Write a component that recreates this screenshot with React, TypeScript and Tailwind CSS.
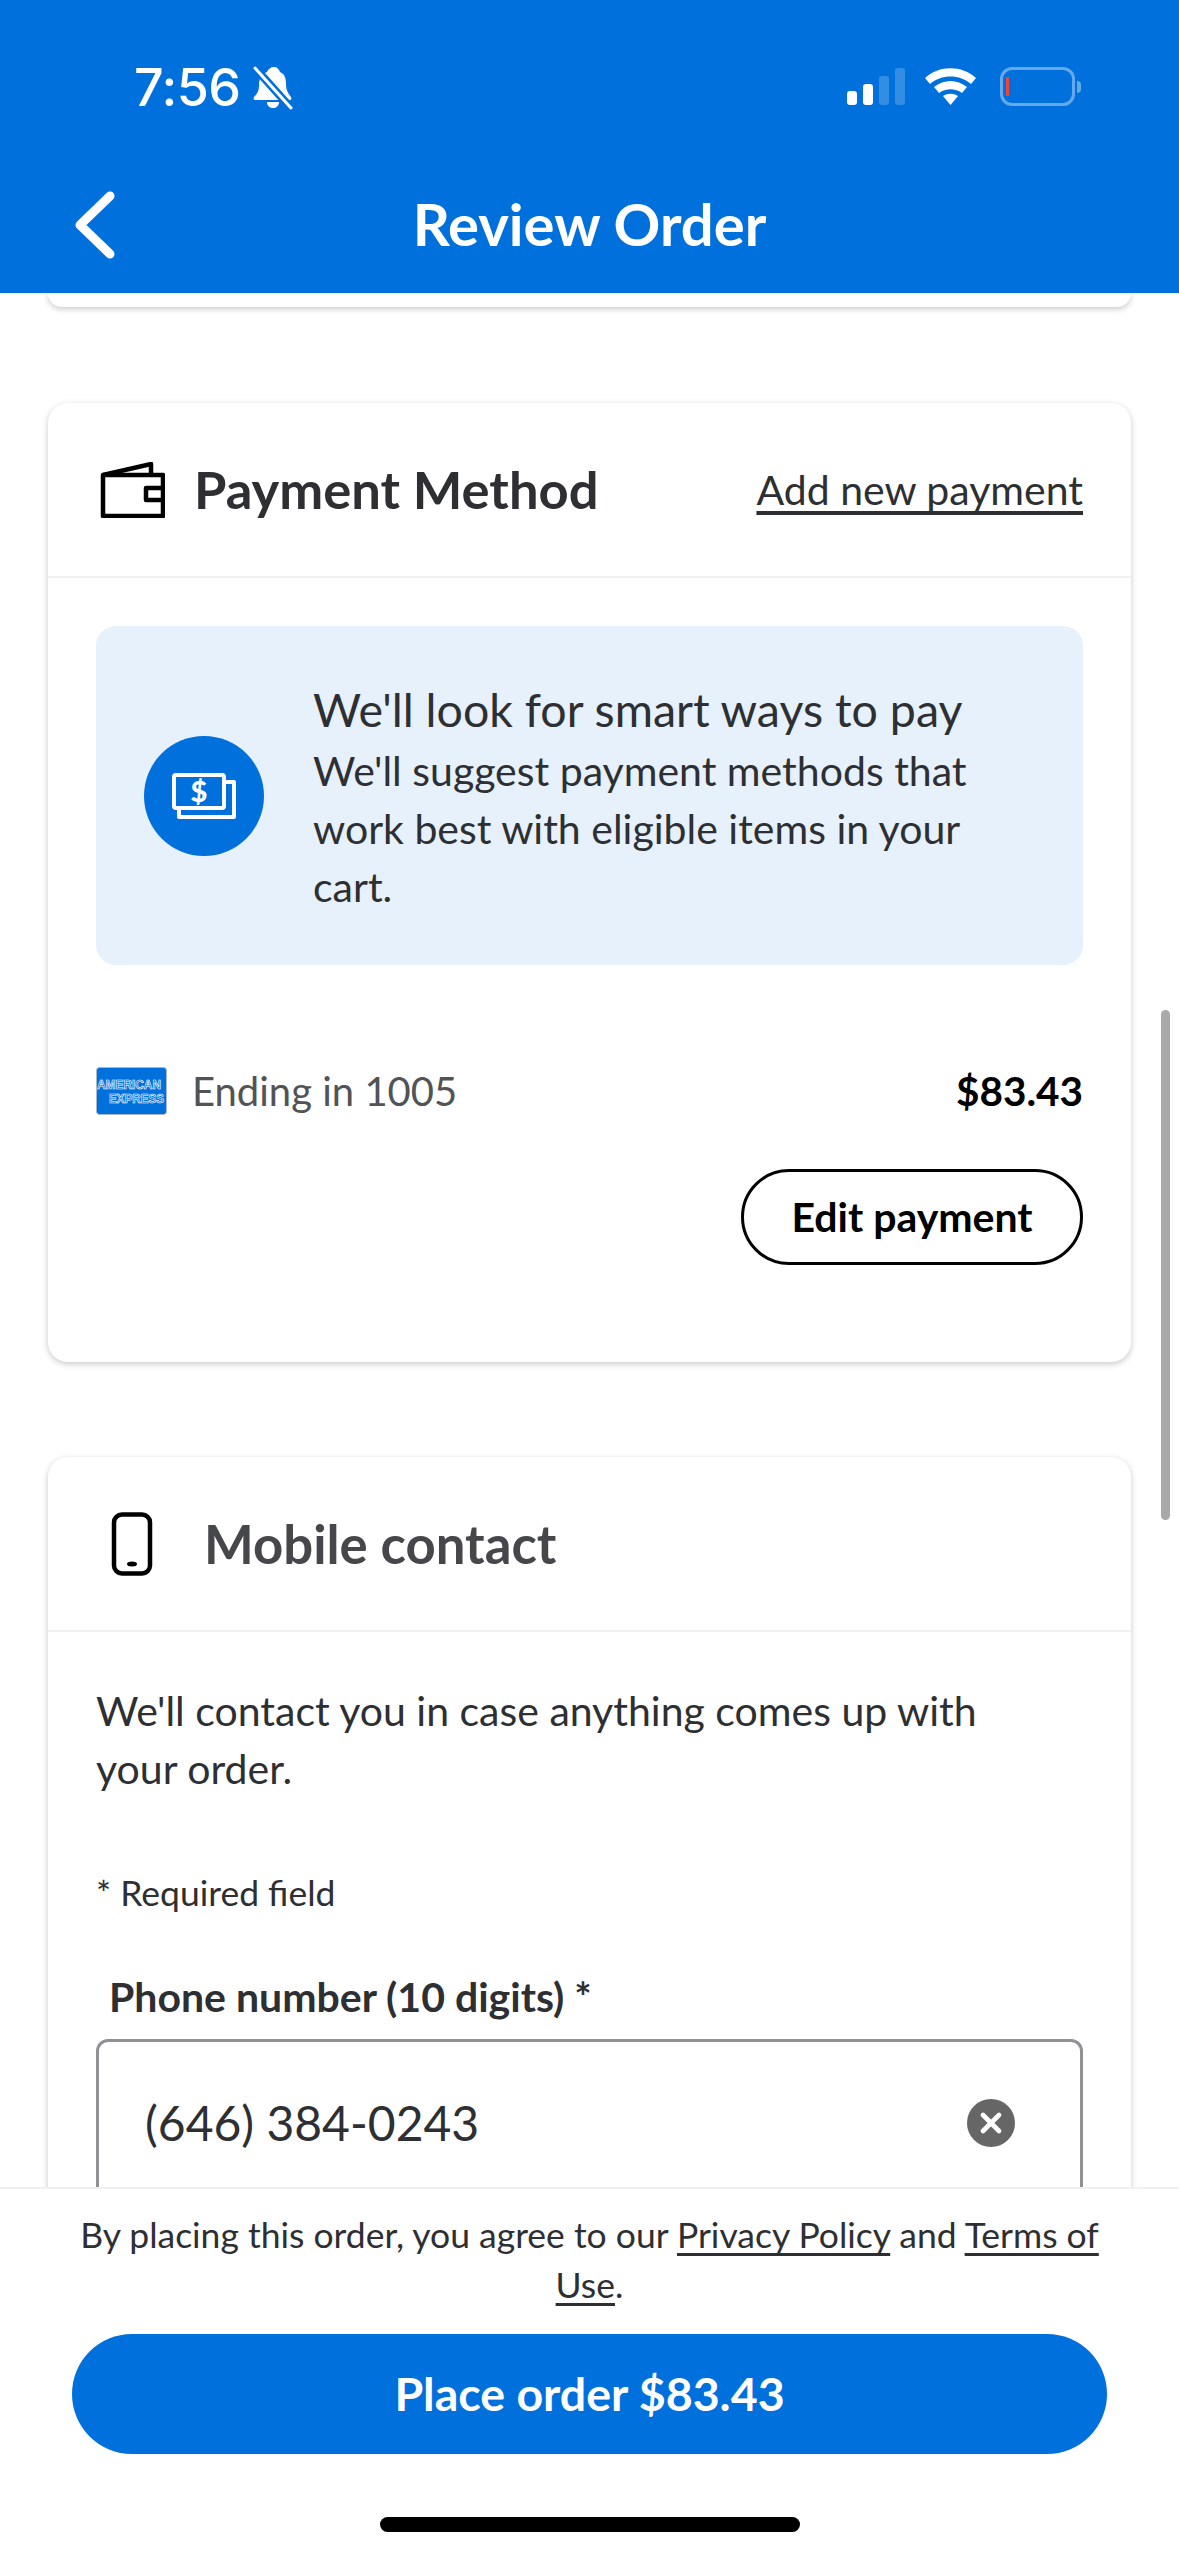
import { X } from 'lucide-react';

const font = { fontFamily: 'Lato, "Noto Sans", sans-serif' };

const StatusBar = () => (
  <div className="flex h-[177px] items-start justify-between pl-[134px] pr-[98px] pt-[60px]">
    <div className="flex items-center gap-[12px]">
      <span className="font-['Inter'] text-[52px] leading-[56px] font-medium text-white tracking-[-0.5px]">7:56</span>
      <svg width="40" height="44" viewBox="0 0 40 44">
        <path d="M21 1c3 0 5 2 6 5 5 2 6 7 6 12 0 6 2 9 5 13 1 2 0 3-2 3H3c-2 0-3-1-2-3 3-3 5-6 5-11 0-7 2-12 8-14 1-3 4-5 7-5z" fill="#fff" />
        <path d="M14 36h12c0 4-3 6-6 6s-6-2-6-6z" fill="#fff" />
        <path d="M3 3l34 38" stroke="#0071dc" strokeWidth="8" />
        <path d="M2 2l36 40" stroke="#fff" strokeWidth="3" strokeLinecap="round" />
      </svg>
    </div>
    <div className="flex items-center gap-[22px] pt-[7px]">
      <div className="flex items-end gap-[6px] h-[37px]">
        <div className="w-[10px] h-[14px] rounded-[3px] bg-white" />
        <div className="w-[10px] h-[21px] rounded-[3px] bg-white" />
        <div className="w-[10px] h-[29px] rounded-[3px] bg-white/20" />
        <div className="w-[10px] h-[37px] rounded-[3px] bg-white/20" />
      </div>
      <svg width="51" height="37" viewBox="0 0 51 37" className="-ml-[2px] mr-[2px]">
        <path d="M0 10C14-3 37-3 51 10l-5 6C35 6 16 6 5 16z" fill="#fff" />
        <path d="M9 19c10-8 23-8 33 0l-5 6c-7-5-16-5-23 0z" fill="#fff" />
        <path d="M18 28c5-3 10-3 15 0l-7.500 9z" fill="#fff" />
      </svg>
      <div className="flex items-center gap-[2px]">
        <div className="w-[75px] h-[39px] rounded-[12px] border-[3px] border-white/40 flex items-center pl-[3px]">
          <div className="w-[3px] h-[19px] bg-[#f44336]" />
        </div>
        <div className="w-[4px] h-[12px] rounded-r-full bg-white/40" />
      </div>
    </div>
  </div>
);

const TopBar = () => (
  <header className="h-[293px] shrink-0 bg-[#0071dc]">
    <StatusBar />
    <div className="relative flex h-[104px] items-center justify-center pb-[10px]">
      <svg className="absolute left-[70px] top-[10px]" width="50" height="76" viewBox="0 0 50 76" fill="none">
        <path d="M40 9L10 38l30 29" stroke="#fff" strokeWidth="9" strokeLinecap="round" strokeLinejoin="round" />
      </svg>
      <h1 className="text-[58px] leading-[70px] font-bold text-white">Review Order</h1>
    </div>
  </header>
);

const cardClass = 'mx-[48px] rounded-[20px] bg-white shadow-[0_2px_6px_rgba(0,0,0,0.22)]';

const WalletIcon = () => (
  <svg width="65" height="56" viewBox="0 0 65 56" fill="none" stroke="#000" strokeWidth="4.500" strokeLinejoin="round">
    <path d="M3 13h60v41H3z" />
    <path d="M3 13L51 2v11" />
    <path d="M63 26H46v12h17" />
  </svg>
);

const PhoneIcon = () => (
  <svg width="42" height="64" viewBox="0 0 42 64" fill="none" className="ml-[1px]">
    <rect x="3" y="2.500" width="36" height="59" rx="8" stroke="#000" strokeWidth="4.500" />
    <ellipse cx="21" cy="52" rx="5" ry="2.500" fill="#000" />
  </svg>
);

const MoneyIcon = () => (
  <svg width="64" height="46" viewBox="0 0 64 46" fill="none" stroke="#fff" strokeWidth="4" strokeLinejoin="round">
    <rect x="2" y="2" width="50" height="33" rx="2" />
    <path d="M52 9h10v35H7v-9" />
    <text x="27" y="29" textAnchor="middle" fill="#fff" stroke="none" fontSize="29" fontWeight="900" fontFamily="Lato, sans-serif">$</text>
  </svg>
);

const AmexLogo = () => (
  <svg width="71" height="48" viewBox="0 0 71 48" className="shrink-0">
    <rect x="0.500" y="0.500" width="70" height="47" rx="3" fill="#0071dc" stroke="#a9b8c8" />
    <text x="1" y="22" fontSize="12.500" fontWeight="700" fontFamily="Liberation Sans, sans-serif" fill="#0071dc" stroke="#fff" strokeWidth="0.6" textLength="64" lengthAdjust="spacingAndGlyphs">AMERICAN</text>
    <text x="13" y="36" fontSize="12.500" fontWeight="700" fontFamily="Liberation Sans, sans-serif" fill="#0071dc" stroke="#fff" strokeWidth="0.6" textLength="55" lengthAdjust="spacingAndGlyphs">EXPRESS</text>
  </svg>
);

const PaymentCard = () => (
  <section className={`${cardClass} mt-[96px] h-[959px]`}>
    <div className="flex h-[175px] items-center border-b-[2px] border-[#f0f0f1] pl-[52px] pr-[48px]">
      <WalletIcon />
      <h2 className="ml-[29px] text-[52.500px] font-bold text-[#2e2f32]">Payment Method</h2>
      <a className="ml-auto text-[41px] text-[#2e2f32] underline underline-offset-[6px] [text-decoration-skip-ink:none]">Add new payment</a>
    </div>
    <div className="px-[48px] pt-[48px]">
      <div className="flex h-[339px] items-center rounded-[20px] bg-[#e6f1fc] pl-[48px] pr-[40px]">
        <div className="flex h-[120px] w-[120px] shrink-0 items-center justify-center rounded-full bg-[#0071dc]">
          <MoneyIcon />
        </div>
        <div className="ml-[49px] text-[#2e2f32]">
          <p className="text-[46.500px] leading-[66px]">We'll look for smart ways to pay</p>
          <p className="text-[41px] leading-[58px]">We'll suggest payment methods that work best with eligible items in your cart.</p>
        </div>
      </div>
      <div className="mt-[100px] flex items-center">
        <AmexLogo />
        <span className="ml-[25px] text-[40px] leading-[52px] text-[#515357]">Ending in 1005</span>
        <span className="ml-auto text-[40.500px] leading-[52px] font-bold text-black">$83.43</span>
      </div>
      <div className="mt-[52px] flex justify-end">
        <button className="h-[96px] w-[342px] rounded-full border-[3px] border-black text-[41px] font-bold text-black">Edit payment</button>
      </div>
    </div>
  </section>
);

const ContactCard = () => (
  <section className={`${cardClass} mt-[95px] h-[900px]`}>
    <div className="flex h-[175px] items-center border-b-[2px] border-[#f0f0f1] pl-[62px]">
      <PhoneIcon />
      <h2 className="ml-[51px] text-[52.700px] font-bold text-[#46474a]">Mobile contact</h2>
    </div>
    <div className="px-[48px] pt-[50px]">
      <p className="max-w-[900px] text-[41px] leading-[58px] text-[#2e2f32]">We'll contact you in case anything comes up with your order.</p>
      <p className="mt-[73px] text-[35.500px] leading-[44px] text-[#2e2f32]">* Required field</p>
      <label className="mt-[58px] block pl-[13px] text-[41px] leading-[48px] font-bold text-[#2e2f32]">Phone number (10 digits) *</label>
      <div className="mt-[18px] flex h-[168px] items-center justify-between rounded-[12px] border-[3px] border-[#909196] pl-[46px] pr-[65px]">
        <span className="text-[48px] text-[#2e2f32]">(646) 384-0243</span>
        <span className="flex h-[48px] w-[48px] items-center justify-center rounded-full bg-[#666]">
          <X size={32} strokeWidth={3.500} className="text-white" />
        </span>
      </div>
    </div>
  </section>
);

const Footer = () => (
  <footer className="h-[369px] shrink-0 border-t-[2px] border-[#f0f0f1] bg-white">
    <p className="mx-auto mt-[21px] w-[1040px] text-center text-[35.500px] leading-[50px] text-[#2e2f32]">
      By placing this order, you agree to our <a className="underline underline-offset-[5px] [text-decoration-skip-ink:none]">Privacy Policy</a> and <a className="underline underline-offset-[5px] [text-decoration-skip-ink:none]">Terms of Use</a>.
    </p>
    <div className="px-[72px] pt-[24px]">
      <button className="h-[120px] w-full rounded-full bg-[#0071dc] text-[46.500px] font-bold text-white">Place order $83.43</button>
    </div>
    <div className="mx-auto mt-[63px] h-[15px] w-[420px] rounded-full bg-black" />
  </footer>
);

export default function App() {
  return (
    <div className="relative flex h-[2556px] w-[1179px] flex-col overflow-hidden bg-white" style={font}>
      <TopBar />
      <main className="min-h-0 flex-1 overflow-hidden">
        <div className={`${cardClass} h-[14px] rounded-t-none`} />
        <PaymentCard />
        <ContactCard />
      </main>
      <div className="absolute right-[9px] top-[1010px] h-[510px] w-[9px] rounded-full bg-[#a9a9a9]" />
      <Footer />
    </div>
  );
}
